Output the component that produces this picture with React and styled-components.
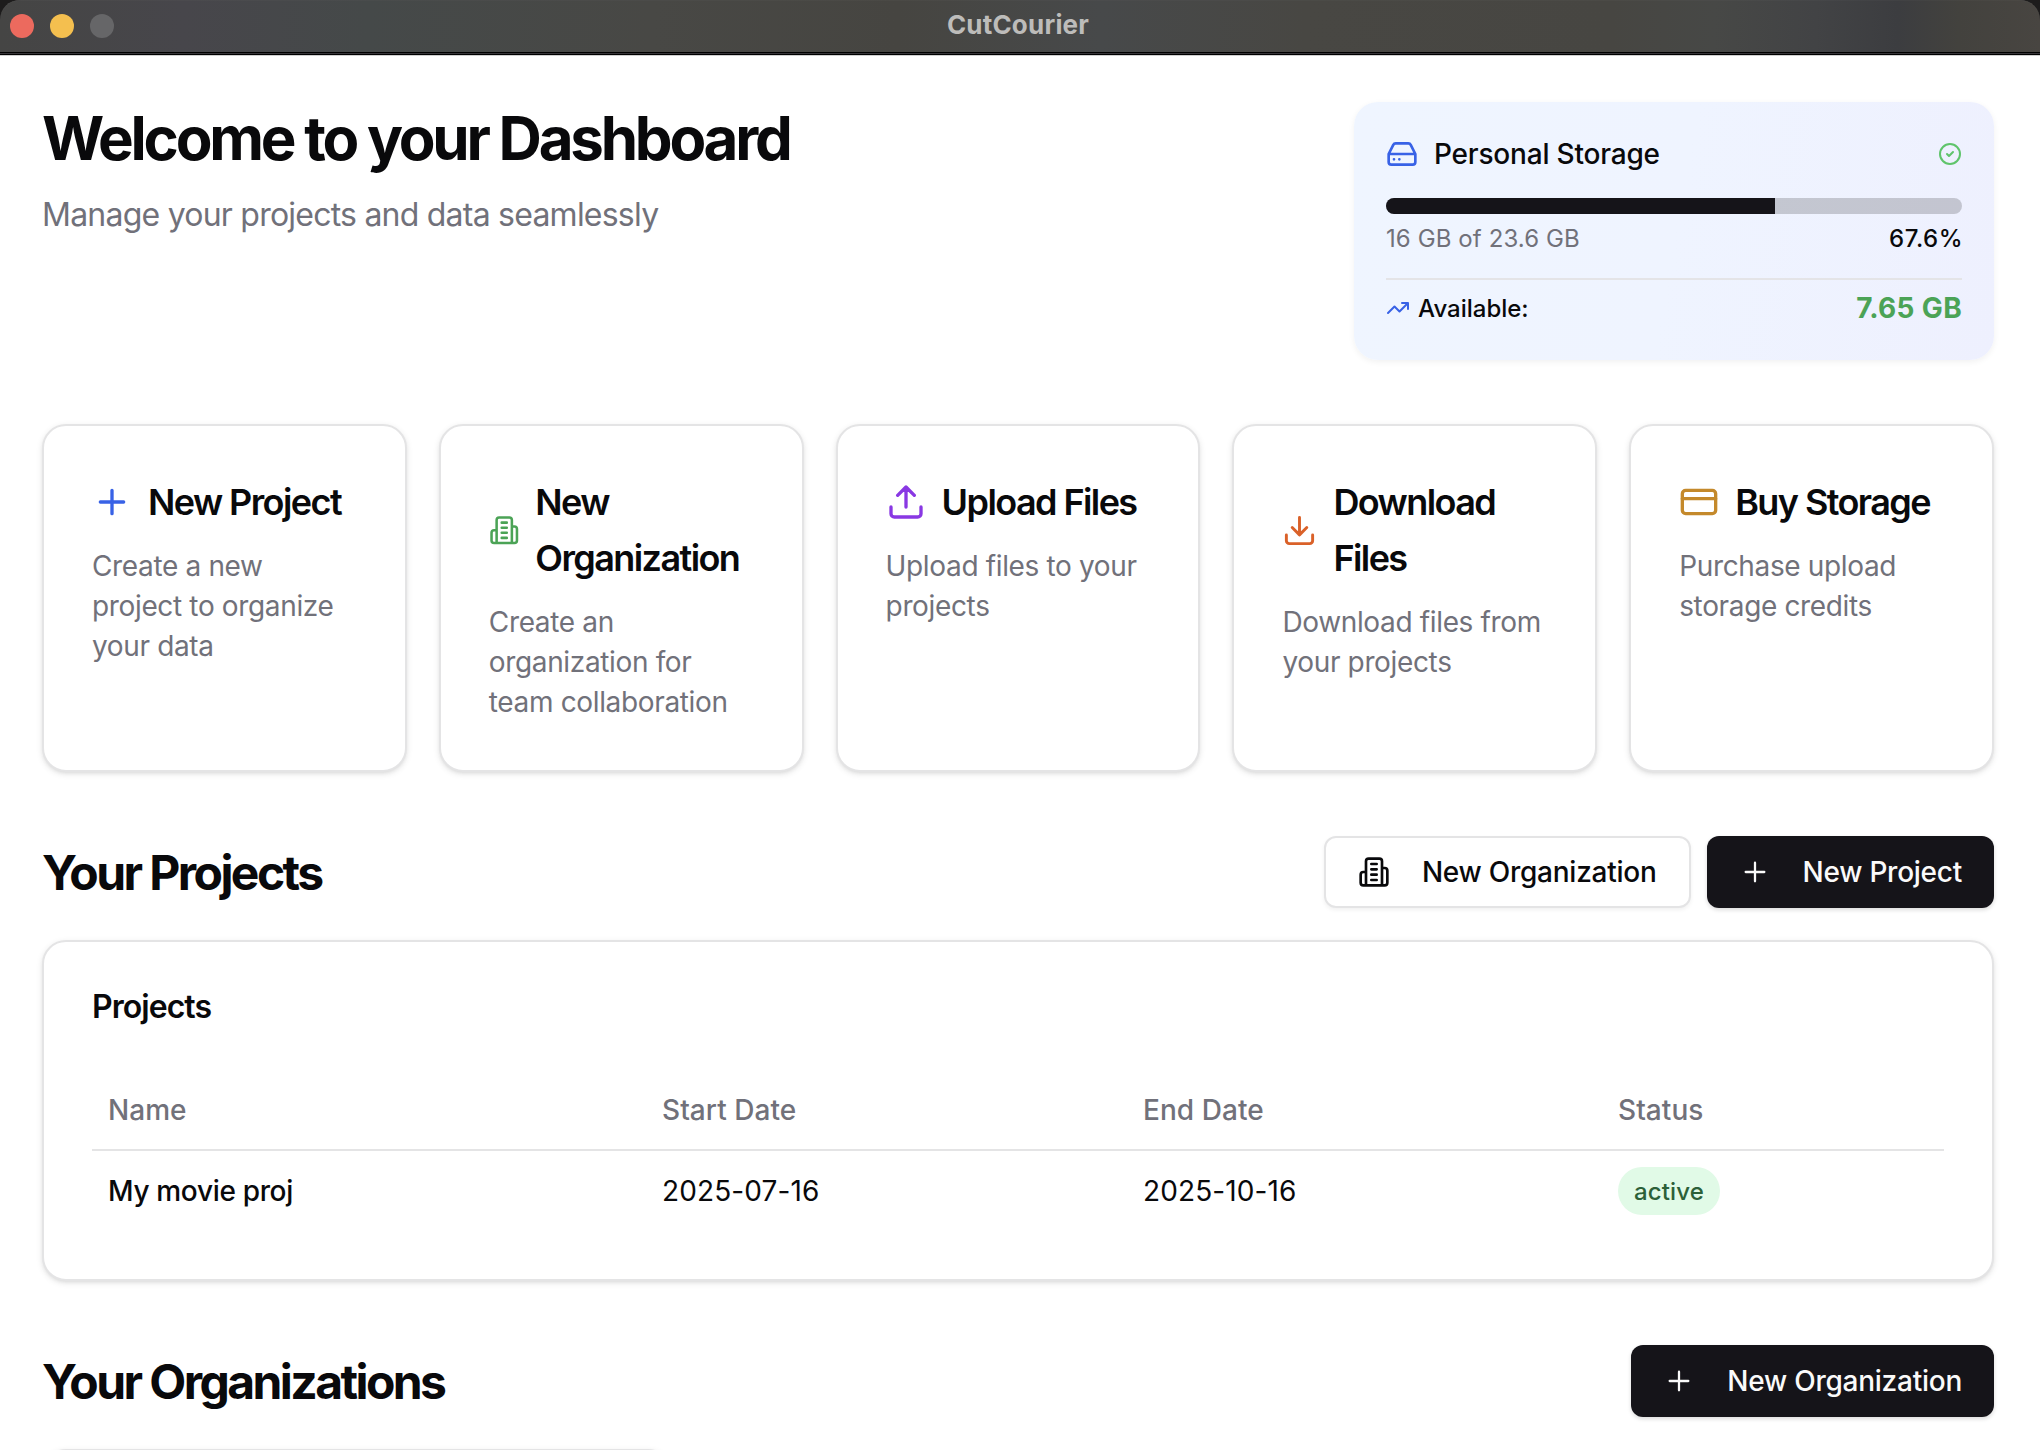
import styled, { createGlobalStyle } from "styled-components";

const GlobalStyle = createGlobalStyle`
  * {
    box-sizing: border-box;
  }
  body {
    margin: 0;
    background-color: #fff;
    color: #09090b;
    font-family: Inter, "Liberation Sans", sans-serif;
    overflow: hidden;
  }
`;

const Window = styled.div`
  display: flex;
  flex-direction: column;
  width: 100%;
  height: 1450px;
  overflow: hidden;
`;

const TitleBarFrame = styled.div`
  flex: none;
  background-color: #1d1c1c;
`;

const TitleBar = styled.header`
  display: grid;
  grid-template-columns: 1fr auto 1fr;
  align-items: center;
  height: 52px;
  padding: 0 14px 0 10px;
  border-radius: 20px 20px 0 0;
  box-shadow: inset 0 1px 1px -1px #6f6e6d;
  background: linear-gradient(
    91deg,
    #454544 0%,
    #47464b 9%,
    #454949 18%,
    #484845 32%,
    #464541 44%,
    #47494a 54%,
    #484743 64%,
    #474642 79%,
    #474846 84%,
    #424345 89%,
    #3c3d40 93%,
    #43423e 96%,
    #484541 100%
  );
`;

const TitleBarEdge = styled.div`
  height: 4px;
  background: linear-gradient(
    #000 0 1px,
    #363438 1px 2px,
    #000 2px 3px,
    #cfcfcf 3px 4px
  );
`;

const Lights = styled.div`
  display: flex;
  gap: 16px;
`;

const Light = styled.span`
  width: 24px;
  height: 24px;
  border-radius: 50%;
  background-color: ${(props) => props.$color};
`;

const WindowTitle = styled.div`
  color: #bdbcba;
  font-size: 26px;
  font-weight: 700;
  line-height: 48px;
  letter-spacing: 0.2px;
  padding-bottom: 2px;
`;

const Page = styled.main`
  display: flex;
  flex-direction: column;
  flex: none;
  gap: 64px;
  padding: 46px 46px 0 42px;
`;

const TopRow = styled.section`
  display: flex;
  justify-content: space-between;
  align-items: flex-start;
`;

const Heading = styled.h1`
  margin: 0 0 17px;
  font-size: 60px;
  font-weight: 700;
  line-height: 72px;
  letter-spacing: -3.23px;
`;

const Subheading = styled.p`
  margin: 0;
  color: #71717a;
  font-size: 32px;
  line-height: 48px;
  letter-spacing: -0.77px;
`;

const StorageCard = styled.div`
  width: 640px;
  height: 258px;
  padding: 32px;
  border-radius: 24px;
  background: linear-gradient(100deg, #eff5ff, #eff4ff 50%, #eef0fe);
  box-shadow: 0 2px 6px rgba(0, 0, 0, 0.06);
`;

const Between = styled.div`
  display: flex;
  justify-content: space-between;
  align-items: center;
  height: ${(props) => props.$height};
`;

const StorageLabel = styled.div`
  display: flex;
  align-items: center;
  gap: 16px;
  font-size: 28px;
  font-weight: 500;
  letter-spacing: -0.2px;
`;

const Progress = styled.div`
  height: 16px;
  margin: 24px 0 8px;
  border-radius: 8px;
  background-color: rgba(24, 24, 27, 0.2);
  overflow: hidden;
`;

const ProgressFill = styled.div`
  height: 100%;
  background-color: #151419;
`;

const Usage = styled.span`
  color: #71717a;
  font-size: 24px;
  letter-spacing: 0.1px;
`;

const Percent = styled.span`
  margin-right: -1px;
  font-size: 24px;
  font-weight: 500;
  letter-spacing: 0.5px;
`;

const AvailableRow = styled.div`
  display: flex;
  justify-content: space-between;
  align-items: center;
  height: 50px;
  margin-top: 24px;
  padding-top: 8px;
  border-top: 2px solid #e4e4e7;
`;

const AvailableLabel = styled.div`
  display: flex;
  align-items: center;
  gap: 8px;
  font-size: 24px;
  font-weight: 500;
`;

const AvailableValue = styled.span`
  color: #4ba356;
  font-size: 28px;
  font-weight: 700;
  letter-spacing: 0.33px;
`;

const Actions = styled.section`
  display: grid;
  grid-template-columns: repeat(5, 1fr);
  gap: 32px;
`;

const Card = styled.div`
  padding: 48px;
  border: 2px solid #e4e4e5;
  border-radius: 24px;
  background-color: #fff;
  box-shadow: 0 2px 6px rgba(0, 0, 0, 0.1), 0 2px 4px -2px rgba(0, 0, 0, 0.1);
`;

const ActionTitle = styled.h3`
  display: flex;
  align-items: center;
  gap: 16px;
  margin: 0 -10px 16px 0;
  font-size: 36px;
  font-weight: 600;
  line-height: 56px;
  letter-spacing: -1.58px;
`;

const ActionText = styled.p`
  margin: 0;
  color: #71717a;
  font-size: 28px;
  line-height: 40px;
  letter-spacing: -0.35px;
`;

const Section = styled.section`
  display: flex;
  flex-direction: column;
  gap: 32px;
`;

const SectionTitle = styled.h2`
  margin: 0;
  padding-top: 2px;
  font-size: 48px;
  font-weight: 700;
  line-height: 64px;
  letter-spacing: -2.57px;
`;

const Buttons = styled.div`
  display: flex;
  gap: 16px;
`;

const Button = styled.button`
  display: flex;
  align-items: center;
  gap: 32px;
  height: 72px;
  padding: 0 32px;
  border: ${(props) => (props.$outline ? "2px solid #e4e4e5" : "none")};
  border-radius: 12px;
  background-color: ${(props) => (props.$outline ? "#fff" : "#151419")};
  color: ${(props) => (props.$outline ? "#09090b" : "#fafafa")};
  box-shadow: 0 2px 4px rgba(0, 0, 0, ${(props) => (props.$outline ? 0.06 : 0.14)});
  font-family: inherit;
  font-size: 28px;
  font-weight: 500;
  letter-spacing: -0.25px;
`;

const CardTitle = styled.h3`
  margin: 0 0 47px;
  padding-top: 1px;
  font-size: 32px;
  font-weight: 600;
  line-height: 32px;
  letter-spacing: -0.95px;
`;

const Table = styled.table`
  width: 100%;
  table-layout: fixed;
  border-collapse: separate;
  border-spacing: 0;
  font-size: 28px;
`;

const Th = styled.th`
  width: ${(props) => props.$width};
  height: 81px;
  padding: 0 16px;
  border-bottom: 2px solid #e4e4e5;
  color: #71717a;
  font-weight: 500;
  letter-spacing: 0.05px;
  text-align: left;
`;

const Td = styled.td`
  height: 80px;
  padding: 0 16px;
  font-weight: ${(props) => (props.$strong ? 500 : 400)};
  letter-spacing: ${(props) => (props.$strong ? "-0.33px" : "0.12px")};
`;

const Badge = styled.span`
  display: flex;
  align-items: center;
  width: fit-content;
  height: 48px;
  padding: 0 16px;
  border-radius: 24px;
  background-color: #e1fae7;
  color: #2c6038;
  font-size: 24px;
  font-weight: 500;
  letter-spacing: 0.15px;
`;

const OrganizationCard = styled(Card)`
  width: 630px;
  height: 240px;
`;

const IconSvg = styled.svg`
  flex: none;
  width: ${(props) => props.$width}px;
  height: ${(props) => props.$width}px;
  fill: none;
  stroke: ${(props) => props.$color || "currentColor"};
  stroke-width: ${(props) => props.$stroke || 2};
  stroke-linecap: round;
  stroke-linejoin: round;
`;

const icons = {
  plus: <path d="M5 12h14M12 5v14" />,
  building: (
    <path d="M6 22V4a2 2 0 0 1 2-2h8a2 2 0 0 1 2 2v18ZM6 12H4a2 2 0 0 0-2 2v6a2 2 0 0 0 2 2h2M18 9h2a2 2 0 0 1 2 2v9a2 2 0 0 1-2 2h-2M10 6h4M10 10h4M10 14h4M10 18h4" />
  ),
  upload: (
    <path d="M21 15v4a2 2 0 0 1-2 2H5a2 2 0 0 1-2-2v-4M17 8l-5-5-5 5M12 3v12" />
  ),
  download: (
    <path d="M21 15v4a2 2 0 0 1-2 2H5a2 2 0 0 1-2-2v-4M7 10l5 5 5-5M12 15V3" />
  ),
  card: (
    <>
      <rect width="20" height="14" x="2" y="5" rx="2" />
      <path d="M2 10h20" />
    </>
  ),
  drive: (
    <path d="M22 12H2M5.45 5.11 2 12v6a2 2 0 0 0 2 2h16a2 2 0 0 0 2-2v-6l-3.45-6.89A2 2 0 0 0 16.76 4H7.24a2 2 0 0 0-1.79 1.11zM6 16h.01M10 16h.01" />
  ),
  check: (
    <>
      <circle cx="12" cy="12" r="10" />
      <path d="m9 12 2 2 4-4" />
    </>
  ),
  trend: <path d="M22 7l-8.5 8.5-5-5L2 17M16 7h6v6" />,
};

const Icon = ({ name, size = 32, color, stroke }) => (
  <IconSvg viewBox="0 0 24 24" $width={size} $color={color} $stroke={stroke}>
    {icons[name]}
  </IconSvg>
);

const actions = [
  {
    icon: "plus",
    size: 40,
    color: "#3862e6",
    title: "New Project",
    text: "Create a new project to organize your data",
  },
  {
    icon: "building",
    size: 30.5,
    color: "#4ba356",
    title: "New Organization",
    text: "Create an organization for team collaboration",
  },
  {
    icon: "upload",
    size: 40,
    color: "#8938e3",
    title: "Upload Files",
    text: "Upload files to your projects",
  },
  {
    icon: "download",
    size: 35,
    color: "#da6129",
    title: "Download Files",
    text: "Download files from your projects",
  },
  {
    icon: "card",
    size: 40,
    color: "#c4892b",
    title: "Buy Storage",
    text: "Purchase upload storage credits",
  },
];

const projects = [
  { name: "My movie proj", start: "2025-07-16", end: "2025-10-16", status: "active" },
];

const usedPercent = 67.6;

const App = () => {
  return (
    <Window>
      <GlobalStyle />
      <TitleBarFrame>
        <TitleBar>
          <Lights>
            <Light $color="#ec6a5e" />
            <Light $color="#f4bf4f" />
            <Light $color="#666668" />
          </Lights>
          <WindowTitle>CutCourier</WindowTitle>
        </TitleBar>
        <TitleBarEdge />
      </TitleBarFrame>
      <Page>
        <TopRow>
          <div>
            <Heading>Welcome to your Dashboard</Heading>
            <Subheading>Manage your projects and data seamlessly</Subheading>
          </div>
          <StorageCard>
            <Between $height="40px">
              <StorageLabel>
                <Icon name="drive" color="#3862e6" />
                Personal Storage
              </StorageLabel>
              <Icon name="check" size={24} color="#5fc46b" />
            </Between>
            <Progress>
              <ProgressFill style={{ width: `${usedPercent}%` }} />
            </Progress>
            <Between $height="32px">
              <Usage>16 GB of 23.6 GB</Usage>
              <Percent>{usedPercent}%</Percent>
            </Between>
            <AvailableRow>
              <AvailableLabel>
                <Icon name="trend" size={24} color="#3862e6" />
                Available:
              </AvailableLabel>
              <AvailableValue>7.65 GB</AvailableValue>
            </AvailableRow>
          </StorageCard>
        </TopRow>

        <Actions>
          {actions.map((action) => (
            <Card key={action.title}>
              <ActionTitle>
                <Icon name={action.icon} size={action.size} color={action.color} />
                <span>{action.title}</span>
              </ActionTitle>
              <ActionText>{action.text}</ActionText>
            </Card>
          ))}
        </Actions>

        <Section>
          <Between $height="72px">
            <SectionTitle>Your Projects</SectionTitle>
            <Buttons>
              <Button $outline>
                <Icon name="building" />
                New Organization
              </Button>
              <Button>
                <Icon name="plus" stroke={1.7} />
                New Project
              </Button>
            </Buttons>
          </Between>
          <Card>
            <CardTitle>Projects</CardTitle>
            <Table>
              <thead>
                <tr>
                  <Th $width="554px">Name</Th>
                  <Th $width="481px">Start Date</Th>
                  <Th $width="475px">End Date</Th>
                  <Th>Status</Th>
                </tr>
              </thead>
              <tbody>
                {projects.map((project) => (
                  <tr key={project.name}>
                    <Td $strong>{project.name}</Td>
                    <Td>{project.start}</Td>
                    <Td>{project.end}</Td>
                    <Td>
                      <Badge>{project.status}</Badge>
                    </Td>
                  </tr>
                ))}
              </tbody>
            </Table>
          </Card>
        </Section>

        <Section>
          <Between $height="72px">
            <SectionTitle>Your Organizations</SectionTitle>
            <Button>
              <Icon name="plus" stroke={1.7} />
              New Organization
            </Button>
          </Between>
          <OrganizationCard />
        </Section>
      </Page>
    </Window>
  );
};

export default App;
